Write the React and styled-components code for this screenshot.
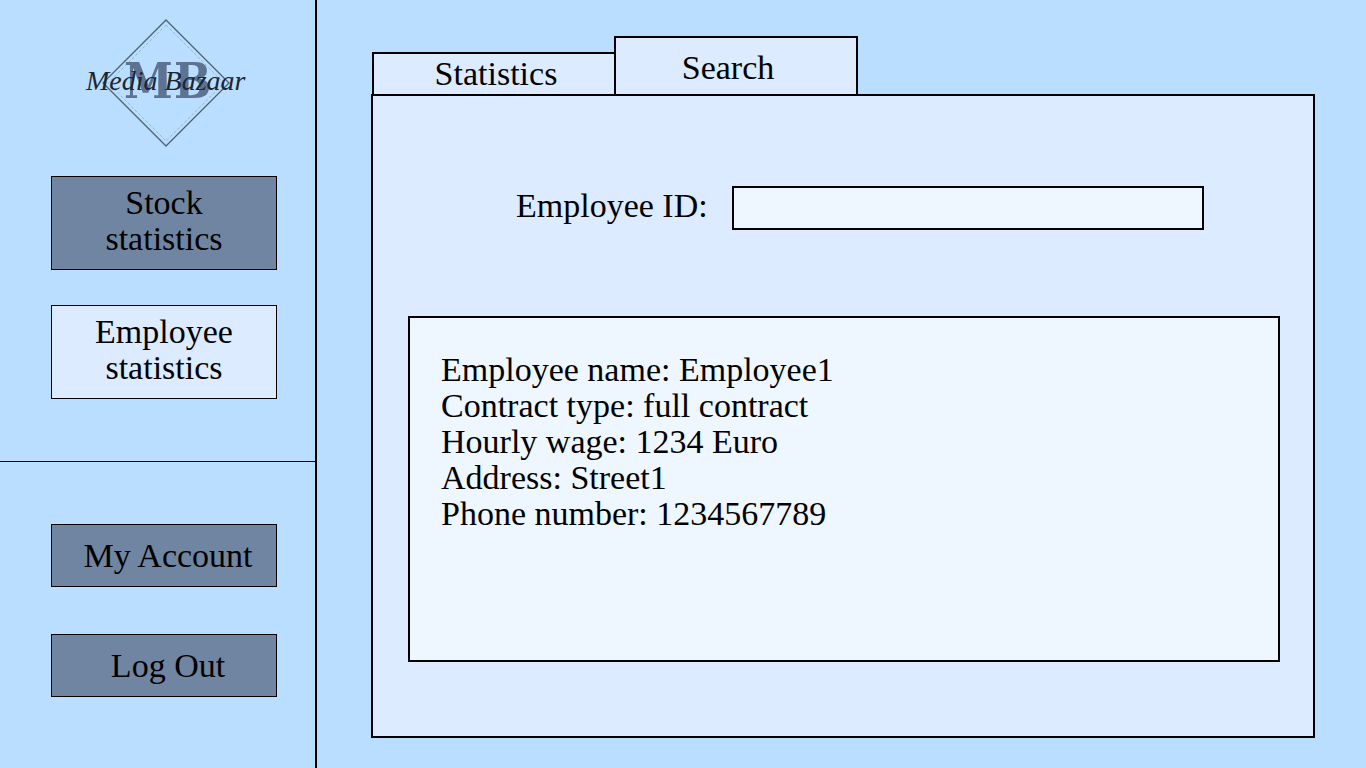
import React, { useState } from "react";
import styled, { createGlobalStyle } from "styled-components";

const GlobalStyle = createGlobalStyle`
  *, *::before, *::after { box-sizing: border-box; }
  body {
    margin: 0;
    background: #badeff;
    color: #000;
    font-family: "Liberation Serif", "Times New Roman", serif;
    font-size: 34px;
    line-height: 36px;
  }
  button, input { font: inherit; color: inherit; border-radius: 0; }
`;

const Page = styled.div`
  display: flex;
  min-height: 100vh;
`;

const Sidebar = styled.aside`
  flex: 0 0 317px;
  border-right: 2px solid #000;
`;

const Logo = styled.svg`
  display: block;
  width: 170px;
  height: 130px;
  margin: 18px 0 28px 82px;
`;

const Nav = styled.nav`
  display: flex;
  flex-direction: column;
  gap: ${(p) => p.$gap}px;
  padding: 0 38px 0 51px;
`;

const Divider = styled.hr`
  margin: 62px 0;
  border: 0;
  border-top: 1px solid #000;
`;

const NavButton = styled.button`
  min-height: 94px;
  padding: 0 24px 4px;
  border: 1px solid #000;
  background: ${(p) => (p.$active ? "#dcebff" : "#7085a1")};
  cursor: pointer;
`;

const AccountButton = styled(NavButton)`
  min-height: 63px;
  padding: 0 0 0 8px;
`;

const Main = styled.main`
  flex: 1;
  min-width: 0;
  display: flex;
  flex-direction: column;
  padding: 36px 51px 30px 54px;
`;

const Tabs = styled.div`
  display: flex;
  align-items: flex-end;
  padding-left: 1px;
`;

const Tab = styled.button`
  width: 244px;
  height: ${(p) => (p.$active ? 58 : 42)}px;
  padding: ${(p) => (p.$active ? "4px 16px 0 0" : "0 0 0 4px")};
  border: 2px solid #000;
  border-bottom: 0;
  background: #dcebff;
  cursor: pointer;

  & + & { margin-left: -2px; }
`;

const Panel = styled.section`
  flex: 1;
  display: flex;
  flex-direction: column;
  padding: 90px 33px 74px 35px;
  border: 2px solid #000;
  background: #dcebff;
`;

const SearchRow = styled.div`
  display: flex;
  align-items: center;
  gap: 24px;
  margin-bottom: 86px;
  padding: 0 76px 0 108px;
`;

const Label = styled.label`
  padding-bottom: 4px;
  white-space: nowrap;
`;

const Field = styled.input`
  flex: 1;
  min-width: 0;
  height: 44px;
  padding: 0 8px;
  border: 2px solid #000;
  background: #eef6ff;
`;

const Details = styled.div`
  flex: 1;
  padding: 34px 31px;
  border: 2px solid #000;
  background: #eef6ff;
`;

const Line = styled.p`
  margin: 0;
`;

const employee = [
  ["Employee name", "Employee1"],
  ["Contract type", "full contract"],
  ["Hourly wage", "1234 Euro"],
  ["Address", "Street1"],
  ["Phone number", "1234567789"],
];

function BrandLogo() {
  return (
    <Logo viewBox="0 0 170 130" role="img" aria-label="Media Bazaar">
      <path d="M84 2 L147 65 L84 128 L21 65 Z" fill="none" stroke="#4f6373" strokeWidth="1.3" />
      <path
        d="M84 7 L142 65 L84 123 L26 65 Z"
        fill="none"
        stroke="#98b7cf"
        strokeDasharray="3 2"
      />
      <g
        fill="#5e7292"
        fontFamily="'DejaVu Serif Condensed', 'DejaVu Serif', serif"
        fontWeight="700"
        fontSize="49"
      >
        <text x="42" y="80">M</text>
        <text x="92" y="80">B</text>
      </g>
      <text
        x="4"
        y="72"
        fill="#1c2731"
        fontFamily="'Liberation Serif', serif"
        fontStyle="italic"
        fontSize="28"
      >
        Media Bazaar
      </text>
    </Logo>
  );
}

export default function App() {
  const [employeeId, setEmployeeId] = useState("");

  return (
    <>
      <GlobalStyle />
      <Page>
        <Sidebar>
          <BrandLogo />
          <Nav $gap={35} aria-label="Statistics">
            <NavButton type="button">Stock statistics</NavButton>
            <NavButton type="button" $active>Employee statistics</NavButton>
          </Nav>
          <Divider />
          <Nav $gap={47} aria-label="Account">
            <AccountButton type="button">My Account</AccountButton>
            <AccountButton type="button">Log Out</AccountButton>
          </Nav>
        </Sidebar>
        <Main>
          <Tabs role="tablist">
            <Tab type="button" role="tab" aria-selected="false">Statistics</Tab>
            <Tab type="button" role="tab" aria-selected="true" $active>Search</Tab>
          </Tabs>
          <Panel role="tabpanel">
            <SearchRow>
              <Label htmlFor="employee-id">Employee ID:</Label>
              <Field
                id="employee-id"
                value={employeeId}
                onChange={(e) => setEmployeeId(e.target.value)}
              />
            </SearchRow>
            <Details>
              {employee.map(([name, value]) => (
                <Line key={name}>{name}: {value}</Line>
              ))}
            </Details>
          </Panel>
        </Main>
      </Page>
    </>
  );
}
